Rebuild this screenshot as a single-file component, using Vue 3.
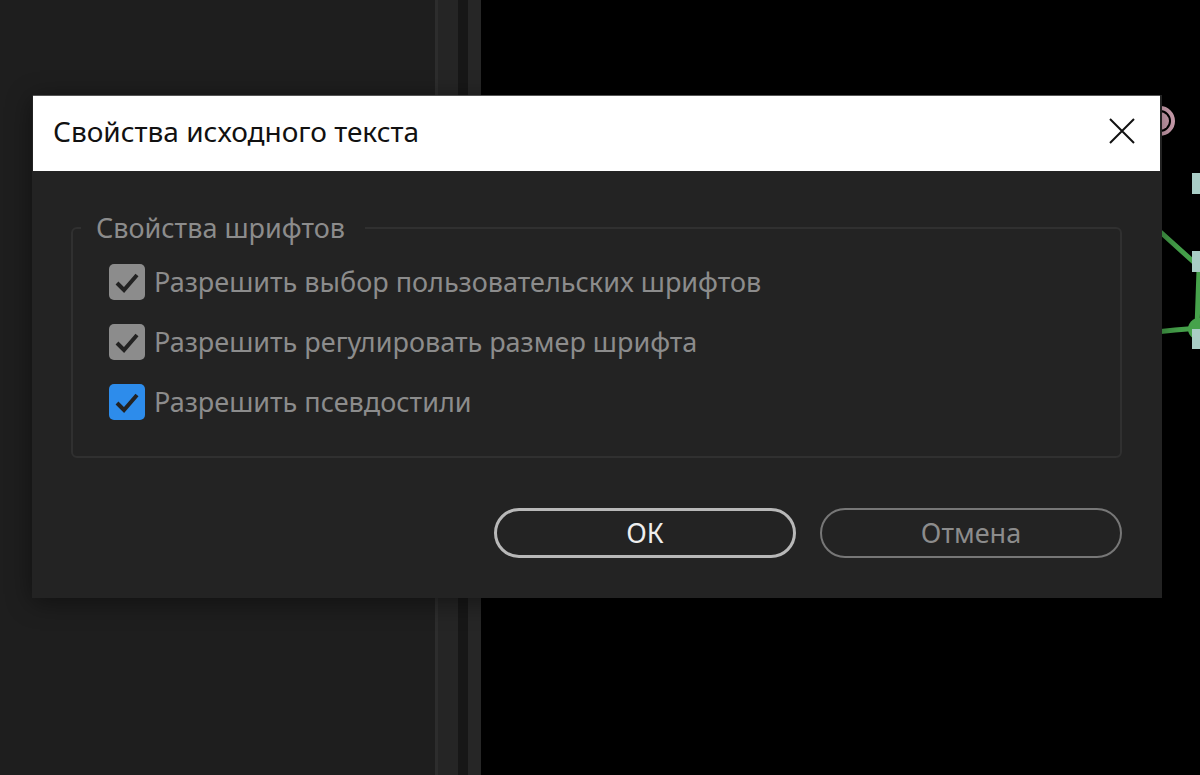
<script setup>
import { ref } from "vue";

const options = ref([
  { id: "fonts", label: "Разрешить выбор пользовательских шрифтов", checked: true },
  { id: "size", label: "Разрешить регулировать размер шрифта", checked: true },
  { id: "faux", label: "Разрешить псевдостили", checked: true, active: true },
]);
const open = ref(true);
const close = () => {
  open.value = false;
};
</script>

<template>
  <main class="workspace">
    <div class="panel"></div>
    <div class="gutter"></div>
    <div class="splitter"></div>
    <div class="edge"></div>
    <div class="preview">
      <svg class="mask" width="60" height="280" viewBox="1140 90 60 280" aria-hidden="true">
        <circle cx="1160" cy="121" r="13" fill="none" stroke="#d3a5b5" stroke-width="4" />
        <circle cx="1160" cy="121" r="9" fill="#d3a5b5" />
        <path
          d="M1156 228 L1197 265 M1199 270 L1197 328 M1156 332 L1175 330 L1200 328"
          fill="none"
          stroke="#46a24b"
          stroke-width="5"
        />
        <circle cx="1199" cy="329" r="11" fill="#46a24b" />
        <path d="M1192 173h8v21h-8z M1192 251h8v21h-8z M1192 329h8v20h-8z" fill="#a9cdc6" />
      </svg>
    </div>

    <section v-if="open" class="dialog" role="dialog" aria-labelledby="dialog-title">
      <header class="titlebar">
        <h1 id="dialog-title">Свойства исходного текста</h1>
        <button class="close" type="button" aria-label="Закрыть" @click="close">
          <svg width="28" height="28" viewBox="0 0 28 28">
            <path d="M2 2L26 26M26 2L2 26" fill="none" stroke="#111" stroke-width="2" />
          </svg>
        </button>
      </header>
      <form class="content" @submit.prevent="close">
        <fieldset>
          <legend>Свойства шрифтов</legend>
          <div v-for="option in options" :key="option.id" class="option">
            <span class="tick" :class="{ active: option.active }">
              <input :id="option.id" v-model="option.checked" type="checkbox" />
              <svg v-if="option.checked" width="36" height="36" viewBox="0 0 36 36">
                <path d="M8 19L15 26L28 11" fill="none" stroke="#232323" stroke-width="4" />
              </svg>
            </span>
            <label :for="option.id">{{ option.label }}</label>
          </div>
        </fieldset>
        <div class="actions">
          <button class="btn primary" type="submit">ОК</button>
          <button class="btn" type="button" @click="close">Отмена</button>
        </div>
      </form>
    </section>
  </main>
</template>

<style>
body {
  margin: 0;
  background: #000;
}
</style>

<style scoped>
.workspace {
  position: relative;
  display: flex;
  min-height: 100vh;
  overflow: hidden;
  font-family: "Noto Sans", "Open Sans", sans-serif;
}
.panel {
  box-sizing: border-box;
  width: 438px;
  background: #1e1e1e;
  border-right: 3px solid #2d2d2d;
}
.gutter {
  width: 20px;
  background: #252525;
}
.splitter {
  width: 10px;
  background: #171717;
}
.edge {
  width: 13px;
  background: #262626;
}
.preview {
  position: relative;
  flex: 1;
  background: #000;
}
.mask {
  position: absolute;
  top: 90px;
  right: 0;
}
.dialog {
  position: absolute;
  top: 95px;
  left: 32px;
  right: 38px;
  background: #232323;
  box-shadow: 0 4px 24px rgba(0, 0, 0, 0.45);
}
.titlebar {
  display: flex;
  align-items: center;
  justify-content: space-between;
  box-sizing: border-box;
  height: 76px;
  margin: 0 2px 0 1px;
  padding: 0 24px 5px 20px;
  background: #fff;
  border-top: 1px solid #555;
}
h1 {
  margin: 0;
  font-size: 28px;
  font-weight: 400;
  line-height: 36px;
  color: #111;
}
.close {
  display: flex;
  padding: 0;
  background: none;
  border: none;
  cursor: pointer;
}
.content {
  padding: 39px 40px 40px 39px;
}
fieldset {
  margin: 0;
  padding: 18px 8px 36px;
  border: 2px solid #303030;
  border-radius: 6px;
}
legend {
  padding: 0 20px 0 15px;
  font-size: 27px;
  line-height: 36px;
  color: #8c8c8c;
}
.option {
  display: flex;
  align-items: center;
  gap: 9px;
  margin-left: 28px;
  height: 36px;
}
.option + .option {
  margin-top: 24px;
}
.option label {
  font-size: 27px;
  line-height: 36px;
  color: #8c8c8c;
}
.tick {
  position: relative;
  width: 36px;
  height: 36px;
}
.tick input {
  display: block;
  width: 36px;
  height: 36px;
  margin: 0;
  appearance: none;
  background: #8c8c8c;
  border-radius: 5px;
}
.tick.active input {
  background: #2d8ceb;
}
.tick svg {
  position: absolute;
  top: 0;
  left: 0;
  pointer-events: none;
}
.actions {
  display: flex;
  justify-content: flex-end;
  gap: 24px;
  margin-top: 50px;
}
.btn {
  width: 302px;
  height: 50px;
  padding: 0;
  font-family: inherit;
  font-size: 27px;
  line-height: 36px;
  color: #8c8c8c;
  background: none;
  border: 2px solid #777;
  border-radius: 25px;
}
.btn.primary {
  color: #eee;
  border: 3px solid #b8b8b8;
}
</style>
